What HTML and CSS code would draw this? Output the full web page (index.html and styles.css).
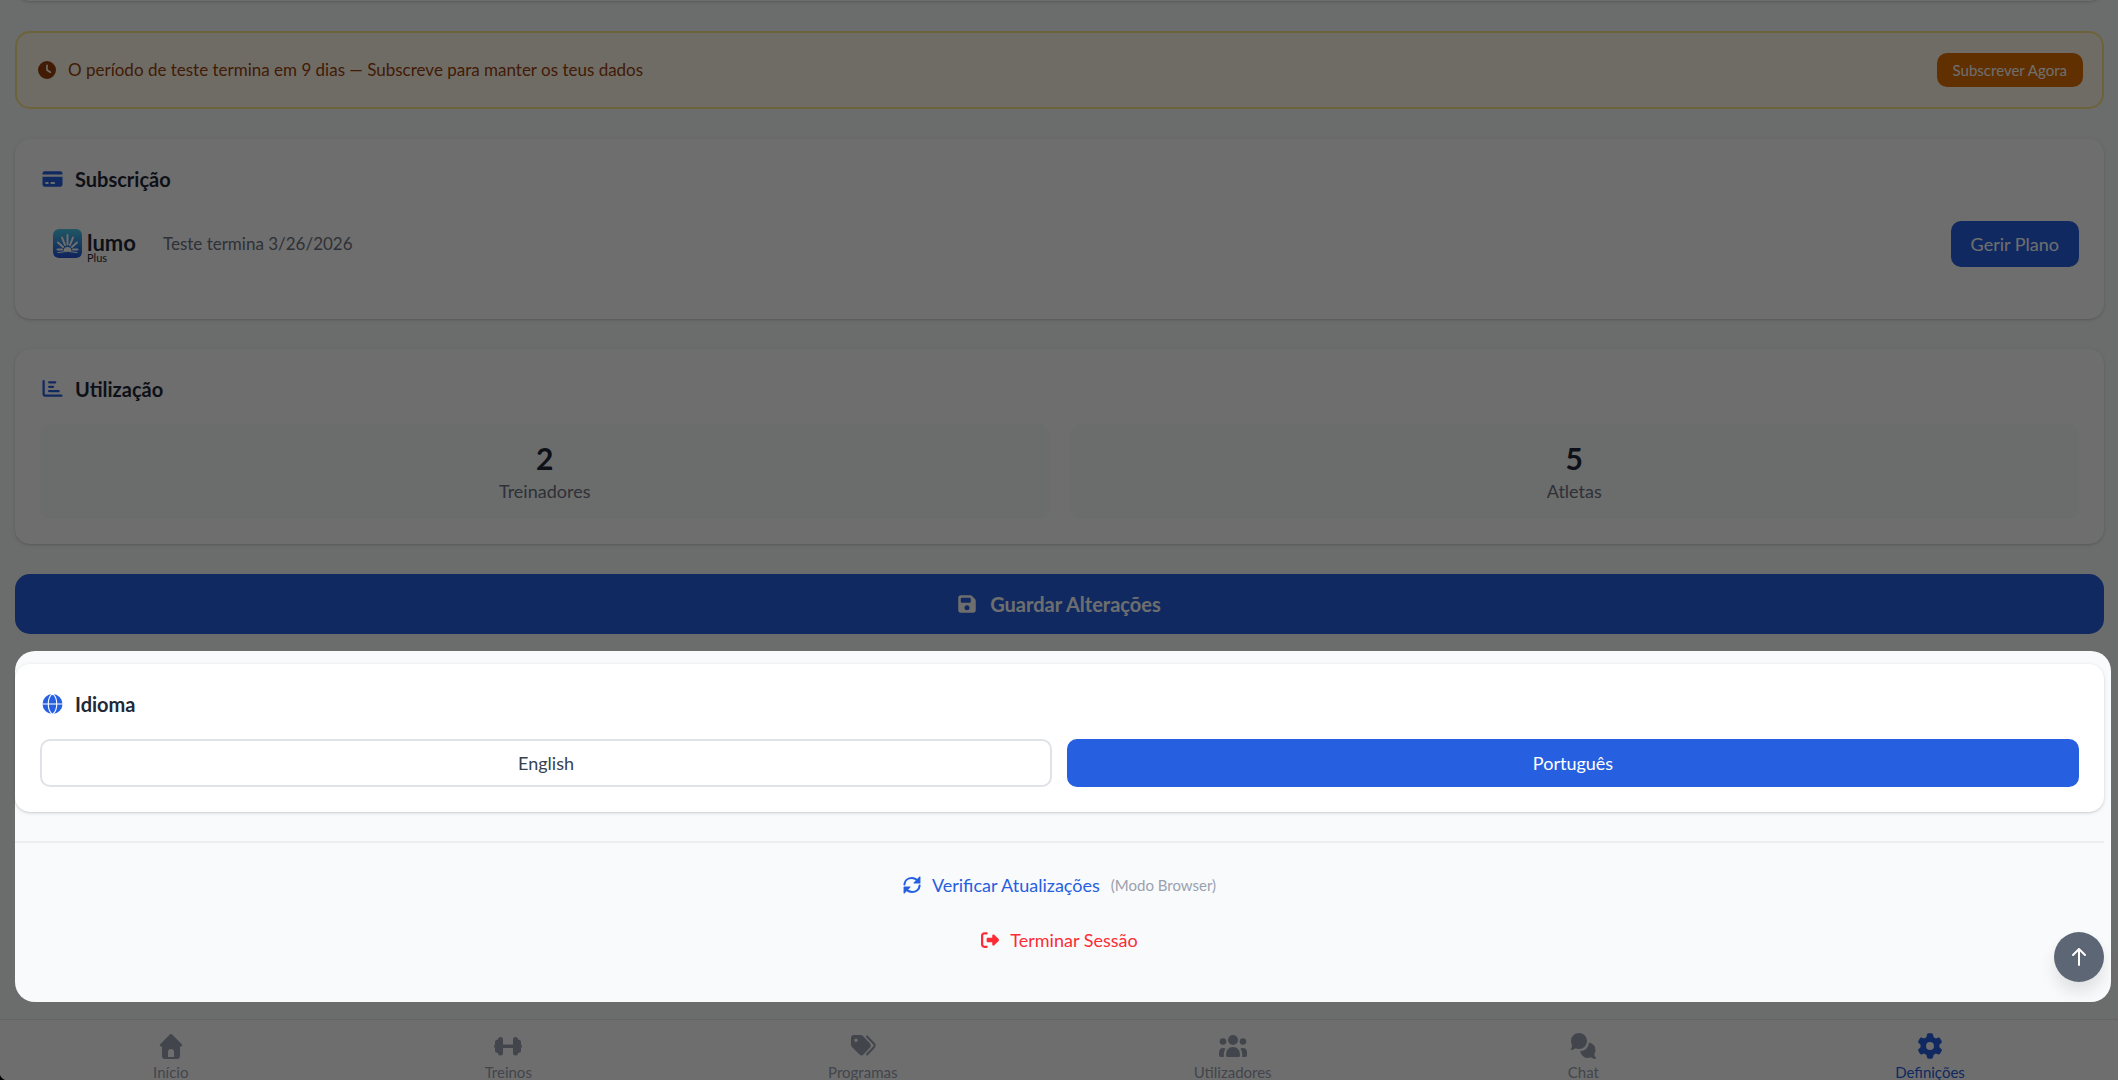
FILE: index.html
```html
<!DOCTYPE html>
<html lang="pt">
<head>
<meta charset="utf-8">
<meta name="viewport" content="width=device-width, initial-scale=1">
<title>Lumo – Definições</title>
<link rel="stylesheet" href="styles.css">
</head>
<body>
<main class="page">
  <div class="card card-scrolled"></div>

  <section class="trial">
    <svg class="icon-sm" viewBox="0 0 512 512"><path d="M256 0a256 256 0 1 1 0 512A256 256 0 1 1 256 0zM232 120V256c0 8 4 15.500 10.700 20l96 64c11 7.400 25.900 4.400 33.300-6.700s4.400-25.900-6.700-33.300L280 243.200V120c0-13.300-10.700-24-24-24s-24 10.700-24 24z"/></svg>
    <p class="trial-text">O período de teste termina em 9 dias — Subscreve para manter os teus dados</p>
    <button type="button" class="btn btn-amber">Subscrever Agora</button>
  </section>

  <section class="card card-plan">
    <h2 class="card-title">
      <svg class="icon" viewBox="-40 -32 720 576"><path fill-rule="evenodd" d="M96 32H544a64 64 0 0 1 64 64V128H32V96A64 64 0 0 1 96 32ZM32 192H608V416a64 64 0 0 1-64 64H96a64 64 0 0 1-64-64ZM136 344a28 28 0 0 0 0 56h48a28 28 0 0 0 0-56ZM288 344a28 28 0 0 0 0 56h80a28 28 0 0 0 0-56Z"/></svg>
      Subscrição
    </h2>
    <div class="plan">
      <div class="brand">
        <svg class="brand-mark" viewBox="0 0 58 58">
          <defs><linearGradient id="sky" x1="0" y1="0" x2="0" y2="1"><stop offset="0" stop-color="#4cc9e8"/><stop offset="1" stop-color="#2350d8"/></linearGradient></defs>
          <rect width="58" height="58" rx="12" fill="url(#sky)"/>
          <path d="M29 12V31M18 17L24 32M40 17L34 32M10 27L20 36M48 27L38 36M9 41L18 41M49 41L40 41" stroke="#fff" stroke-width="4" stroke-linecap="round"/>
          <path d="M21 44a8 8 0 0 1 16 0Z" fill="#fff"/>
          <path d="M10 47Q29 42 48 47" fill="none" stroke="#fff" stroke-width="2" stroke-linecap="round"/>
        </svg>
        <div class="brand-words"><span class="brand-name">lumo</span><span class="brand-tier">Plus</span></div>
      </div>
      <p class="plan-note">Teste termina 3/26/2026</p>
      <button type="button" class="btn btn-blue">Gerir Plano</button>
    </div>
  </section>

  <section class="card">
    <h2 class="card-title">
      <svg class="icon" viewBox="-40 -32 720 576" fill="none" stroke="currentColor" stroke-width="64" stroke-linecap="round"><path d="M64 32V400a48 48 0 0 0 48 48H576M224 64H400M224 192H336M224 320H496"/></svg>
      Utilização
    </h2>
    <div class="stats">
      <div class="stat"><span class="stat-value">2</span><span class="stat-label">Treinadores</span></div>
      <div class="stat"><span class="stat-value">5</span><span class="stat-label">Atletas</span></div>
    </div>
  </section>

  <button type="button" class="save">
    <svg class="icon-save" viewBox="0 0 448 512"><path d="M64 32C28.700 32 0 60.700 0 96V416c0 35.300 28.700 64 64 64H384c35.300 0 64-28.700 64-64V173.300c0-17-6.700-33.300-18.700-45.300L352 50.700C340 38.700 323.700 32 306.700 32H64zm0 96c0-17.700 14.300-32 32-32H288c17.700 0 32 14.300 32 32v64c0 17.700-14.300 32-32 32H96c-17.700 0-32-14.300-32-32V128zM224 288a64 64 0 1 1 0 128 64 64 0 1 1 0-128z"/></svg>
    Guardar Alterações
  </button>

  <div class="highlighted">
    <section class="card">
      <h2 class="card-title">
        <svg class="icon" viewBox="0 0 640 512"><circle cx="320" cy="256" r="256"/><path d="M40 256H600M320 -10C175 100 175 412 320 522M320 -10C465 100 465 412 320 522" fill="none" stroke="#fff" stroke-width="28"/></svg>
        Idioma
      </h2>
      <div class="languages">
        <button type="button" class="lang">English</button>
        <button type="button" class="lang lang-active" aria-pressed="true">Português</button>
      </div>
    </section>
    <footer class="account">
      <button type="button" class="link link-blue">
        <svg class="icon-link" viewBox="0 0 512 512"><path d="M40 240C48 130 140 56 256 56C330 56 385 90 430 145M472 272C464 382 372 456 256 456C182 456 127 422 82 367" fill="none" stroke="currentColor" stroke-width="60" stroke-linecap="round"/><path d="M496 24V200a16 16 0 0 1-16 16H320c-20 0-28-20-14-34L462 18c14-12 34-6 34 6ZM16 488V312a16 16 0 0 1 16-16H192c20 0 28 20 14 34L50 494c-14 12-34 6-34-6Z"/></svg>
        Verificar Atualizações
        <span class="mode">(Modo Browser)</span>
      </button>
      <button type="button" class="link link-red">
        <svg class="icon-link" viewBox="0 0 512 512"><path d="M377.900 105.900L500.700 228.700c7.200 7.200 11.300 17.100 11.300 27.300s-4.100 20.100-11.300 27.300L377.900 406.100c-6.400 6.400-15 9.900-24 9.900c-18.700 0-33.900-15.200-33.900-33.900l0-62.100-128 0c-17.700 0-32-14.300-32-32l0-64c0-17.700 14.300-32 32-32l128 0 0-62.100c0-18.700 15.200-33.900 33.900-33.900c9 0 17.600 3.600 24 9.900zM160 96L96 96c-17.700 0-32 14.300-32 32l0 256c0 17.700 14.300 32 32 32l64 0c17.700 0 32 14.300 32 32s-14.300 32-32 32l-64 0c-53 0-96-43-96-96L0 128C0 75 43 32 96 32l64 0c17.700 0 32 14.300 32 32s-14.300 32-32 32z"/></svg>
        Terminar Sessão
      </button>
    </footer>
    <div class="spotlight"></div>
  </div>
</main>

<button type="button" class="to-top" aria-label="Voltar ao topo">
  <svg viewBox="0 0 20 20" fill="none" stroke="currentColor" stroke-width="2" stroke-linecap="round" stroke-linejoin="round"><path d="M10 18V2M4 8L10 2L16 8"/></svg>
</button>

<nav class="tabs">
  <a class="tab" href="#inicio">
    <svg viewBox="0 0 30 26"><path fill-rule="evenodd" d="M15 1Q15.800 1 16.500 1.700L26 11.500Q27 13 25.300 13.500H24V23Q24 26 21 26H9Q6 26 6 23V13.500H4.700Q3 13 4 11.500L13.500 1.700Q14.200 1 15 1ZM12 24H18V19Q18 16 15 16Q12 16 12 19Z"/></svg>Início</a>
  <a class="tab" href="#treinos">
    <svg viewBox="0 0 30 26"><path d="M5 6.500Q5 4 7.500 4H8Q10 4 10 6.500V11.500H20V6.500Q20 4 22 4H22.500Q25 4 25 6.500Q28 6.500 28 9V11.500Q29 12 29 13.200Q29 14.500 28 15V17.500Q28 20 25 20Q25 22.500 22.500 22.500H22Q20 22.500 20 20V15H10V20Q10 22.500 8 22.500H7.500Q5 22.500 5 20Q2 20 2 17.500V15Q1 14.500 1 13.200Q1 12 2 11.500V9Q2 6.500 5 6.500Z"/></svg>Treinos</a>
  <a class="tab" href="#programas">
    <svg viewBox="0 0 30 26"><path fill-rule="evenodd" d="M3 5Q3 2 6 2H12.500Q14 2 15 3L22 10.500Q23.500 12.500 22 14.500L15.500 21.500Q13.500 23.500 11.500 21.500L4 14Q3 13 3 11.500ZM8 5.500A1.700 1.700 0 1 0 8 9A1.700 1.700 0 1 0 8 5.500Z"/><path d="M19 3.500L26.200 11Q27.500 12.500 26.200 14L19 21.500" fill="none" stroke="currentColor" stroke-width="2" stroke-linecap="round"/></svg>Programas</a>
  <a class="tab" href="#utilizadores">
    <svg viewBox="0 0 30 26"><circle cx="15" cy="7" r="5"/><circle cx="5" cy="8.500" r="3.300"/><circle cx="25" cy="8.500" r="3.300"/><path d="M8 22.500Q8 14 15 14Q22 14 22 22.500Q22 24 20.500 24H9.500Q8 24 8 22.500ZM1 22V20Q1 15 5 15Q7 15 7.700 15.500Q5.500 18 5.800 24H2.500Q1 24 1 22ZM29 22V20Q29 15 25 15Q23 15 22.300 15.500Q24.500 18 24.200 24H27.500Q29 24 29 22Z"/></svg>Utilizadores</a>
  <a class="tab" href="#chat">
    <svg viewBox="0 0 30 26"><path d="M11 0A8 8 0 0 1 19 8A8 8 0 0 1 11 16Q9 16 7.500 15.300Q6 17 3 17Q2.300 16.700 2.800 16Q4.300 14 4 12.500Q3 10.500 3 8A8 8 0 0 1 11 0Z"/><path d="M21 9.500Q27.500 11 27.500 17Q27.500 19.500 26.300 21Q26.500 23.500 28 25Q28.300 26 27.500 26Q24.500 26 22.700 24.300Q21 25 19.500 25Q14 25 12 18.300Q20 17.500 21 9.500Z"/></svg>Chat</a>
  <a class="tab tab-active" href="#definicoes">
    <svg viewBox="-48 0 608 512"><path d="M495.900 166.600c3.200 8.700 .5 18.400-6.400 24.600l-43.300 39.400c1.100 8.300 1.700 16.800 1.700 25.400s-.6 17.100-1.700 25.400l43.300 39.400c6.900 6.200 9.600 15.900 6.400 24.600c-4.400 11.900-9.700 23.300-15.800 34.300l-4.700 8.100c-6.600 11-14 21.400-22.100 31.200c-5.900 7.200-15.700 9.600-24.500 6.800l-55.700-17.700c-13.400 10.300-28.200 18.900-44 25.400l-12.500 57.100c-2 9.100-9 16.300-18.200 17.800c-13.800 2.300-28 3.500-42.500 3.500s-28.700-1.200-42.500-3.500c-9.200-1.500-16.200-8.700-18.200-17.800l-12.500-57.100c-15.800-6.500-30.600-15.100-44-25.400L83.100 425.900c-8.800 2.800-18.600 .3-24.500-6.800c-8.100-9.800-15.500-20.200-22.100-31.200l-4.700-8.100c-6.100-11-11.400-22.400-15.800-34.300c-3.200-8.700-.5-18.400 6.400-24.600l43.300-39.400C64.600 273.100 64 264.600 64 256s.6-17.100 1.700-25.400L22.400 191.200c-6.900-6.200-9.600-15.900-6.400-24.600c4.400-11.900 9.700-23.300 15.800-34.300l4.700-8.100c6.600-11 14-21.400 22.100-31.200c5.900-7.200 15.700-9.600 24.500-6.800l55.700 17.700c13.400-10.300 28.200-18.900 44-25.400l12.500-57.100c2-9.100 9-16.300 18.200-17.800C227.300 1.200 241.500 0 256 0s28.700 1.200 42.500 3.500c9.200 1.500 16.200 8.700 18.200 17.800l12.500 57.100c15.800 6.500 30.600 15.100 44 25.400l55.700-17.700c8.800-2.800 18.600-.3 24.500 6.800c8.100 9.800 15.500 20.200 22.100 31.200l4.700 8.100c6.100 11 11.400 22.400 15.800 34.300zM256 336a80 80 0 1 0 0-160 80 80 0 1 0 0 160z"/></svg>Definições</a>
</nav>
<div class="window-corner"></div>
</body>
</html>
```
FILE: styles.css
```css
* {
  box-sizing: border-box;
}

html,
body {
  height: 100%;
}

body {
  margin: 0;
  overflow: hidden;
  background: #f9fafb;
  color: #1f2937;
  font-family: Lato, "Liberation Sans", sans-serif;
  font-size: 18px;
  line-height: 26px;
}

h2,
p {
  margin: 0;
}

button {
  margin: 0;
  border: 0;
  font: inherit;
  color: inherit;
  cursor: pointer;
}

svg {
  display: block;
  flex: none;
  fill: currentColor;
}

svg[fill="none"] {
  fill: none;
}

.page {
  display: flex;
  flex-direction: column;
  gap: 30px;
  padding: 0 14px 80px 15px;
}

.card {
  padding: 25px;
  border-radius: 15px;
  background: #fff;
  box-shadow: 0 1px 4px rgba(0, 0, 0, 0.1), 0 1px 2px rgba(0, 0, 0, 0.1);
}

.card-scrolled {
  margin-top: -49px;
}

.card-plan {
  padding-bottom: 52px;
}

.card-title {
  display: flex;
  align-items: center;
  gap: 10px;
  margin-bottom: 20px;
  font-size: 20px;
  line-height: 30px;
  font-weight: 700;
}

.icon {
  width: 25px;
  height: 20px;
  color: #2660e0;
}

.trial {
  display: flex;
  align-items: center;
  gap: 12px;
  padding: 20px 19px;
  border: 2px solid #fde68a;
  border-radius: 15px;
  background: #fffbeb;
  color: #9a3f0b;
}

.icon-sm {
  width: 18px;
  height: 18px;
  margin-left: 2px;
}

.trial-text {
  flex: 1;
  font-size: 17px;
}

.btn {
  color: #fff;
  border-radius: 10px;
}

.btn-amber {
  padding: 4px 16px;
  background: #e17100;
  font-size: 15px;
}

.btn-blue {
  margin-left: auto;
  padding: 10px 20px;
  background: #2660e0;
}

.plan {
  display: flex;
  align-items: center;
  padding: 7px 0 0 13px;
}

.brand {
  display: flex;
  gap: 5px;
}

.brand-mark {
  width: 29px;
  height: 29px;
  margin-top: 4px;
}

.brand-words {
  display: flex;
  flex-direction: column;
  padding-top: 8px;
}

.brand-name {
  font-size: 22px;
  line-height: 20px;
  font-weight: 700;
}

.brand-tier {
  font-size: 11px;
  line-height: 10px;
}

.plan-note {
  margin-left: 27px;
  color: #6b7280;
  font-size: 17px;
}

.stats {
  display: grid;
  grid-template-columns: 1fr 1fr;
  gap: 20px;
}

.stat {
  display: flex;
  flex-direction: column;
  align-items: center;
  padding: 15px;
  border-radius: 10px;
  background: #f9fafb;
}

.stat-value {
  font-size: 30px;
  line-height: 39px;
  font-weight: 700;
}

.stat-label {
  color: #6b7280;
}

.save {
  display: flex;
  align-items: center;
  justify-content: center;
  gap: 14px;
  padding: 15px;
  border-radius: 15px;
  background: #2660e0;
  color: #fff;
  font-size: 20px;
  line-height: 30px;
  font-weight: 700;
}

.icon-save {
  width: 18px;
  height: 20px;
}

.highlighted {
  position: relative;
}

.languages {
  display: grid;
  grid-template-columns: 1fr 1fr;
  gap: 15px;
}

.lang {
  padding: 9px;
  border: 2px solid #dfe2e7;
  border-radius: 10px;
  background: #fff;
  color: #374151;
}

.lang-active {
  border-color: #2660e0;
  background: #2660e0;
  color: #fff;
}

.account {
  display: flex;
  flex-direction: column;
  align-items: center;
  gap: 29px;
  margin-top: 29px;
  padding: 29px 0 49px;
  border-top: 2px solid #eceef0;
}

.link {
  display: flex;
  align-items: center;
  gap: 11px;
  padding: 0;
  background: none;
}

.link-blue {
  color: #2660e0;
}

.link-red {
  color: #fb2c36;
}

.icon-link {
  width: 18px;
  height: 18px;
}

.mode {
  color: #99a1af;
  font-size: 15px;
}

/* Guided-tour overlay: everything outside the highlighted area is dimmed */
.spotlight {
  position: absolute;
  z-index: 30;
  inset: -13px -7px 0 0;
  border-radius: 20px;
  box-shadow: 0 0 0 9999px rgba(0, 0, 0, 0.57);
  pointer-events: none;
}

.to-top {
  position: fixed;
  z-index: 20;
  right: 14px;
  bottom: 98px;
  display: grid;
  place-items: center;
  width: 50px;
  height: 50px;
  padding: 0;
  border-radius: 50%;
  background: #5d6675;
  color: #fff;
  box-shadow: 0 10px 15px rgba(0, 0, 0, 0.1);
}

.to-top svg {
  width: 20px;
  height: 20px;
}

.tabs {
  position: fixed;
  z-index: 10;
  left: 0;
  right: 0;
  bottom: -10px;
  display: flex;
  justify-content: space-around;
  padding: 13px 5px 8px;
  border-top: 1px solid #e5e7eb;
  background: #fff;
}

.tab {
  display: flex;
  flex-direction: column;
  align-items: center;
  gap: 3px;
  color: #99a1af;
  font-size: 15px;
  line-height: 20px;
  text-decoration: none;
}

.tab svg {
  width: 30px;
  height: 26px;
}

.tab-active {
  color: #2660e0;
}

.window-corner {
  position: fixed;
  z-index: 40;
  left: 0;
  bottom: 0;
  width: 8px;
  height: 8px;
  background: radial-gradient(circle at 100% 0, transparent 8px, #000 9px);
}
```
